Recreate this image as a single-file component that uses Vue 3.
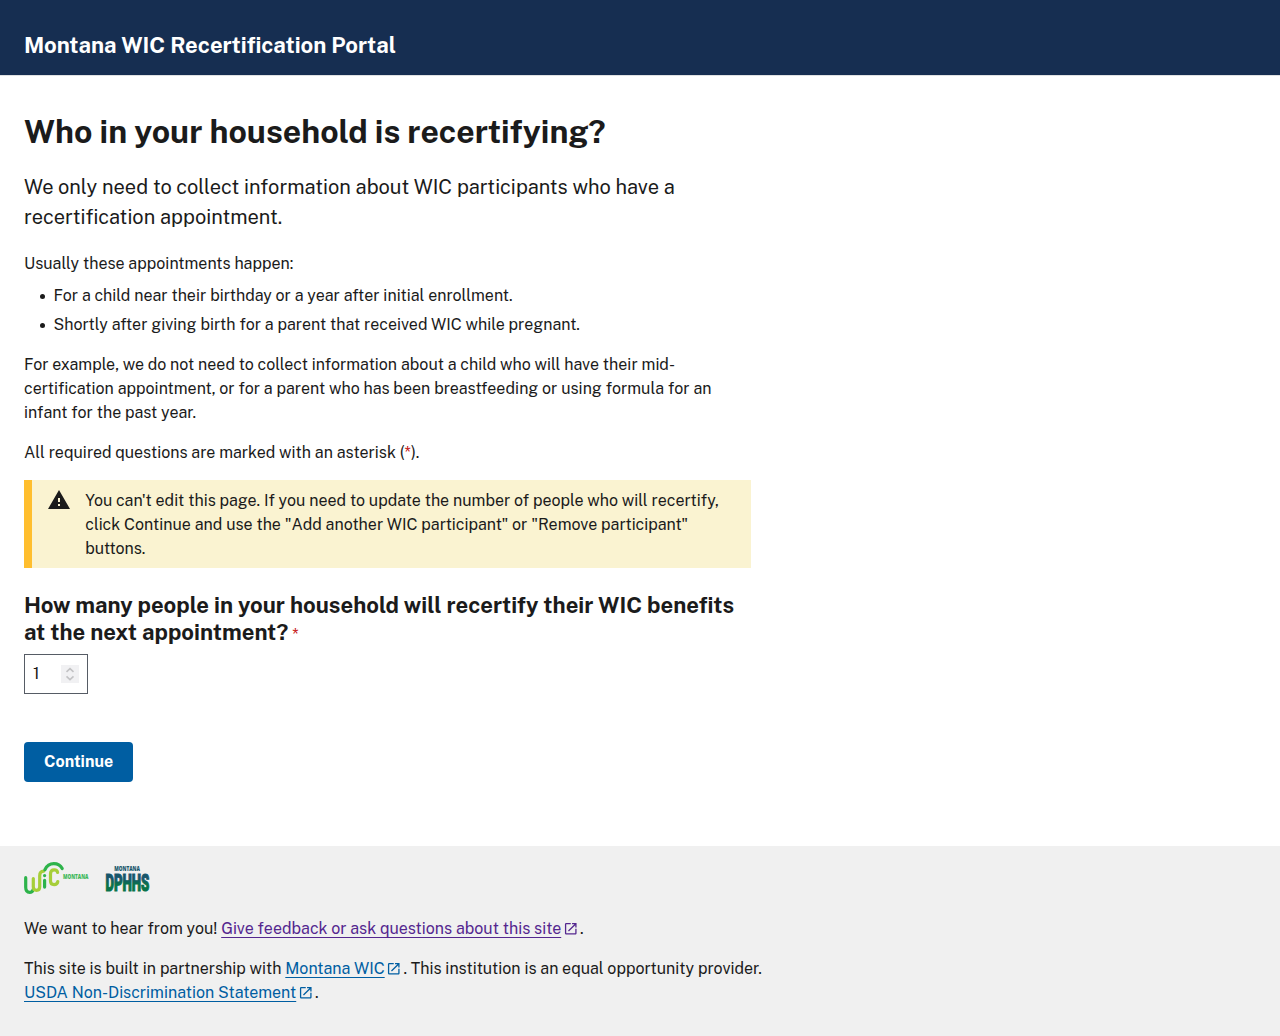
<script setup>
const appointments = [
  'For a child near their birthday or a year after initial enrollment.',
  'Shortly after giving birth for a parent that received WIC while pregnant.'
]
const launchIcon =
  'M19 19H5V5h7V3H5a2 2 0 0 0-2 2v14a2 2 0 0 0 2 2h14c1.1 0 2-.9 2-2v-7h-2v7zM14 3v2h3.59l-9.83 9.83 1.41 1.41L19 6.41V10h2V3h-7z'
</script>

<template>
  <div class="page">
    <header class="header">
      <span class="header-title">Montana WIC Recertification Portal</span>
    </header>

    <main class="main">
      <h1>Who in your household is recertifying?</h1>
      <p class="intro">
        We only need to collect information about WIC participants who have a recertification appointment.
      </p>
      <p class="lead-in">Usually these appointments happen:</p>
      <ul class="list">
        <li v-for="item in appointments" :key="item">{{ item }}</li>
      </ul>
      <p class="example">
        For example, we do not need to collect information about a child who will have their mid-certification
        appointment, or for a parent who has been breastfeeding or using formula for an infant for the past year.
      </p>
      <p>All required questions are marked with an asterisk (<span class="required">*</span>).</p>

      <div class="alert">
        <svg class="alert-icon" viewBox="0 0 24 24" aria-hidden="true">
          <path d="M1 21h22L12 2 1 21zm12-3h-2v-2h2v2zm0-4h-2v-4h2v4z" />
        </svg>
        <p>
          You can't edit this page. If you need to update the number of people who will recertify, click Continue
          and use the "Add another WIC participant" or "Remove participant" buttons.
        </p>
      </div>

      <h2>
        How many people in your household will recertify their WIC benefits at the next appointment?<span class="required mark"> *</span>
      </h2>
      <div class="number">
        <span>1</span>
        <svg class="spinner" viewBox="0 0 18 18" aria-hidden="true">
          <path d="M5.5 6.8 9 3.6l3.5 3.2M5.5 11.4 9 14.6l3.5-3.2" />
        </svg>
      </div>
      <button class="button" type="button">Continue</button>
    </main>

    <footer class="footer">
      <div class="logos">
        <svg width="65" height="32" viewBox="0 0 65 32" role="img" aria-label="Montana WIC">
          <g fill="none" stroke-width="3.2" stroke-linecap="round">
            <path stroke="#2db34a" d="M1.7 15.7v9.6q0 5 4 5 2.7 0 3.3-2.5" />
            <path stroke="#a6ce39" d="M9.3 16.5v8.2q0 3.6 3.2 3.6t3.2-3.6v-11q0-4.4 4-4.6" />
            <path stroke="#2db34a" d="M20.6 18.3v6.8M20.9 7.7C23 3.4 26 1.7 29.8 1.7c4.2 0 7 2.2 8.4 4.8" />
            <path stroke="#a6ce39" d="M33.6 10.4q-.4-2.6-3.4-2.6-3.7 0-3.7 4v7.2q0 3.6 3.6 3.6 3.3 0 3.7-3.1" />
          </g>
          <circle cx="20.6" cy="13.6" r="1.6" fill="#2db34a" />
          <text x="39" y="17.4" class="wic-text" textLength="25.4" lengthAdjust="spacingAndGlyphs">MONTANA</text>
        </svg>
        <svg width="45" height="32" viewBox="0 0 45 32" role="img" aria-label="Montana DPHHS">
          <defs>
            <linearGradient id="dphhs" gradientUnits="userSpaceOnUse" x1="0" y1="11" x2="0" y2="29">
              <stop offset=".3" stop-color="#17566b" />
              <stop offset=".65" stop-color="#08734a" />
            </linearGradient>
          </defs>
          <text x="9.3" y="9.1" class="dphhs-top" textLength="25.6" lengthAdjust="spacingAndGlyphs">MONTANA</text>
          <text x="0.4" y="28.5" class="dphhs-text" textLength="44" lengthAdjust="spacingAndGlyphs">DPHHS</text>
        </svg>
      </div>
      <p>
        We want to hear from you!
        <a class="visited">Give feedback or ask questions about this site</a><svg class="launch visited" viewBox="0 0 24 24"><path :d="launchIcon" /></svg>.
      </p>
      <p>
        This site is built in partnership with <a>Montana WIC</a><svg class="launch" viewBox="0 0 24 24"><path :d="launchIcon" /></svg>. This institution is an equal opportunity provider.<br />
        <a>USDA Non-Discrimination Statement</a><svg class="launch" viewBox="0 0 24 24"><path :d="launchIcon" /></svg>.
      </p>
    </footer>
  </div>
</template>

<style>
body {
  margin: 0;
}
</style>

<style scoped>
.page {
  display: flex;
  flex-direction: column;
  min-height: 1036px;
  background: #fff;
  color: #1b1b1b;
  font-family: "Public Sans", Roboto, "Liberation Sans", sans-serif;
  font-size: 16.008px;
  line-height: 24px;
}
p,
h1,
h2,
ul {
  margin: 0;
  padding: 0;
}
.header {
  box-sizing: border-box;
  height: 76px;
  padding: 32px 24px 0;
  background: #162e51;
  border-bottom: 1px solid #dfe1e2;
}
.header-title {
  display: block;
  color: #fff;
  font-size: 22.08px;
  font-weight: 700;
  line-height: 27px;
}
.main {
  width: 727px;
  padding: 36px 24px 64px;
}
h1 {
  margin-bottom: 20px;
  font-size: 32px;
  line-height: 40px;
}
.intro {
  margin-bottom: 20px;
  font-size: 20.01px;
  line-height: 30px;
}
.lead-in {
  margin-bottom: 8px;
}
.list {
  display: flex;
  flex-direction: column;
  gap: 5px;
  margin-bottom: 16px;
  list-style: none;
}
.list li {
  display: flex;
}
.list li::before {
  content: "";
  flex: none;
  width: 5.5px;
  height: 5.5px;
  margin: 9.7px 8.25px 0 15.75px;
  border-radius: 50%;
  background: #1b1b1b;
}
.example {
  margin-bottom: 16px;
}
.required {
  color: #c40d0d;
}
.alert {
  display: flex;
  margin: 15px 0 24px;
  padding: 8px 20px 8px 15px;
  border-left: 8px solid #ffbe2e;
  background: #faf3d1;
}
.alert p {
  margin: 1px 0 -1px;
}
.alert-icon {
  flex: none;
  width: 24px;
  height: 24px;
  margin-right: 14.3px;
  fill: #1b1b1b;
}
h2 {
  font-size: 22.08px;
  line-height: 27px;
}
.mark {
  font-size: 16px;
  font-weight: 400;
  line-height: 16px;
}
.number {
  box-sizing: border-box;
  display: flex;
  align-items: center;
  justify-content: space-between;
  width: 64px;
  height: 40px;
  margin-top: 8px;
  padding: 0 8px;
  border: 1px solid #565c65;
}
.spinner {
  width: 18px;
  height: 18px;
  background: #f1f1f3;
  fill: none;
  stroke: #c2c2c4;
  stroke-width: 1.6;
}
.button {
  display: block;
  height: 40px;
  margin-top: 48px;
  padding: 0 20px;
  border: 0;
  border-radius: 4px;
  background: #005ea2;
  color: #fff;
  font: inherit;
  font-weight: 700;
}
.footer {
  flex: 1;
  padding: 16px 24px 0;
  background: #f0f0f0;
}
.footer p {
  margin-bottom: 16px;
}
.logos {
  display: flex;
  gap: 16px;
  height: 32px;
  margin-bottom: 23px;
}
.logos svg {
  overflow: visible;
}
.wic-text {
  fill: #3db85a;
  font: 800 6.2px "Open Sans", sans-serif;
}
.dphhs-top {
  fill: #17566b;
  font: 800 7.4px "Open Sans", sans-serif;
}
.dphhs-text {
  fill: url(#dphhs);
  stroke: url(#dphhs);
  stroke-width: 1.2px;
  font: 900 23.5px Roboto, sans-serif;
}
a {
  color: #005ea2;
  text-decoration: underline;
  text-decoration-skip-ink: none;
  text-decoration-thickness: 1px;
  text-underline-offset: 3px;
}
.launch {
  width: 15.5px;
  height: 15.5px;
  margin: 0 1.6px 0 1.6px;
  fill: #005ea2;
  vertical-align: -2.8px;
}
a.visited {
  color: #54278f;
}
.launch.visited {
  fill: #54278f;
}
</style>
